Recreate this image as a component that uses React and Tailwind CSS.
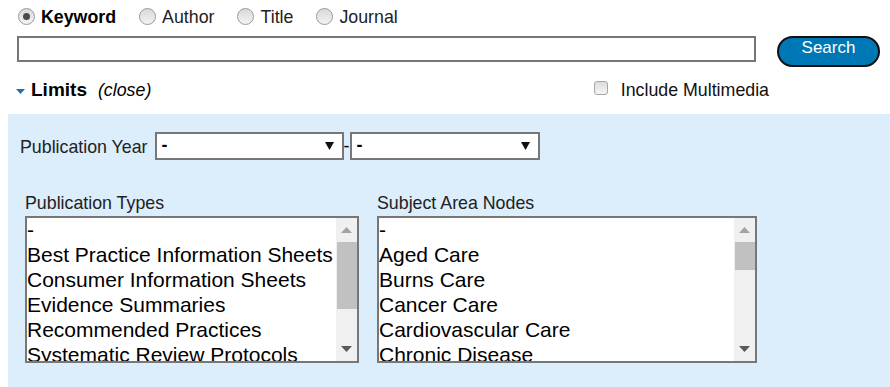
import React from 'react';

const pubTypes = [
  '-',
  'Best Practice Information Sheets',
  'Consumer Information Sheets',
  'Evidence Summaries',
  'Recommended Practices',
  'Systematic Review Protocols',
  'Systematic Reviews',
];

const subjectNodes = [
  '-',
  'Aged Care',
  'Burns Care',
  'Cancer Care',
  'Cardiovascular Care',
  'Chronic Disease',
  'Dental Care',
];

// Radio circle in the old grey style
const Radio = ({ checked }) => (
  <span className="w-[17px] h-[17px] rounded-full border border-[#9a9a9a] bg-gradient-to-b from-[#d8d8d8] to-[#f4f4f4] flex items-center justify-center shrink-0">
    {checked && <span className="w-[7px] h-[7px] rounded-full bg-[#4a4a4a]" />}
  </span>
);

const Arrow = ({ up, color }) => (
  <svg width="11" height="6" viewBox="0 0 11 6">
    <path d={up ? 'M0 6 L5.5 0 L11 6 Z' : 'M0 0 L5.5 6 L11 0 Z'} fill={color} />
  </svg>
);

// Listbox with fake Windows-ish scrollbar
const ListBox = ({ items, width, thumb }) => (
  <div className={`${width} h-[147px] border-2 border-[#777] bg-white flex`}>
    <div className="flex-1 overflow-hidden">
      {items.map((item, i) => (
        <div key={i} className="h-[25px] leading-[23px] text-[21px] text-black whitespace-nowrap">
          {item}
        </div>
      ))}
    </div>
    <div className="w-[21px] bg-[#f0f0f0] flex flex-col">
      <div className="h-[24px] flex items-center justify-center">
        <Arrow up color="#a3a3a3" />
      </div>
      <div className={`${thumb} ml-[1px] bg-[#c1c1c1]`} />
      <div className="flex-1" />
      <div className="h-[24px] flex items-center justify-center">
        <Arrow color="#5a5a5a" />
      </div>
    </div>
  </div>
);

const FakeSelect = ({ width }) => (
  <div className={`${width} h-[28px] border-2 border-[#777] bg-white flex items-center justify-between pl-[5px] pr-[8px]`}>
    <span className="text-[17.8px] text-black font-bold leading-none">-</span>
    <svg width="9" height="8" viewBox="0 0 9 8">
      <path d="M0 0 L9 0 L4.5 8 Z" fill="#111" />
    </svg>
  </div>
);

const App = () => {
  const searchTypes = [
    { name: 'Keyword', checked: true },
    { name: 'Author' },
    { name: 'Title' },
    { name: 'Journal' },
  ];

  return (
    <div className="w-[890px] h-[387px] overflow-hidden bg-white font-['Liberation_Sans',Arial,sans-serif] text-[17.8px] text-[#111]">
      {/* search type radios */}
      <div className="mt-[8px] ml-[18px] h-[17px] flex items-center gap-[23px]">
        {searchTypes.map((t) => (
          <label key={t.name} className="flex items-center gap-[6px]">
            <Radio checked={t.checked} />
            <span className={`mt-[2px] ${t.checked ? 'font-bold text-black' : 'text-[#222]'}`}>{t.name}</span>
          </label>
        ))}
      </div>

      {/* search box */}
      <div className="mt-[11px] ml-[17px] flex items-start">
        <div className="w-[739px] h-[26px] border-2 border-[#777] bg-white" />
        <button className="ml-[21px] w-[103px] h-[31px] rounded-full border-2 border-[#111] bg-[#0077b5] text-white text-[17px] leading-[18px] flex justify-center pt-[1px]">
          Search
        </button>
      </div>

      {/* limits row */}
      <div className="mt-[11px] h-[24px] flex items-center pl-[16px]">
        <svg width="9" height="5" viewBox="0 0 9 5" className="mt-[3px]">
          <path d="M0 0 L9 0 L4.5 5 Z" fill="#1f6fae" />
        </svg>
        <span className="ml-[6px] font-bold text-[19px] text-black">Limits</span>
        <span className="ml-[11px] italic text-black">(close)</span>
        <div className="flex-1" />
        <span className="w-[14px] h-[14px] rounded-[3px] border border-[#a6a6a6] bg-gradient-to-b from-[#dcdcdc] to-[#f5f5f5] -mt-[4px]" />
        <span className="ml-[13px] mr-[121px] text-[#111]">Include Multimedia</span>
      </div>

      {/* limits panel */}
      <div className="mt-[12px] ml-[8px] h-[273px] bg-[#dcedfb] pt-[18px]">
        <div className="pl-[12px] h-[28px] flex items-center">
          <span className="text-[#222] mt-[2px]">Publication Year</span>
          <div className="ml-[7px]">
            <FakeSelect width="w-[189px]" />
          </div>
          <span className="w-[6px] text-center text-black">-</span>
          <FakeSelect width="w-[190px]" />
        </div>

        <div className="mt-[31px] pl-[17px] flex gap-[18px]">
          <div>
            <div className="h-[22px] leading-[20px] pt-[2px] mb-[3px] text-[#222]">Publication Types</div>
            <ListBox items={pubTypes} width="w-[334px]" thumb="h-[67px]" />
          </div>
          <div>
            <div className="h-[22px] leading-[20px] pt-[2px] mb-[3px] text-[#222]">Subject Area Nodes</div>
            <ListBox items={subjectNodes} width="w-[380px]" thumb="h-[28px]" />
          </div>
        </div>
      </div>
    </div>
  );
};

export default App;
